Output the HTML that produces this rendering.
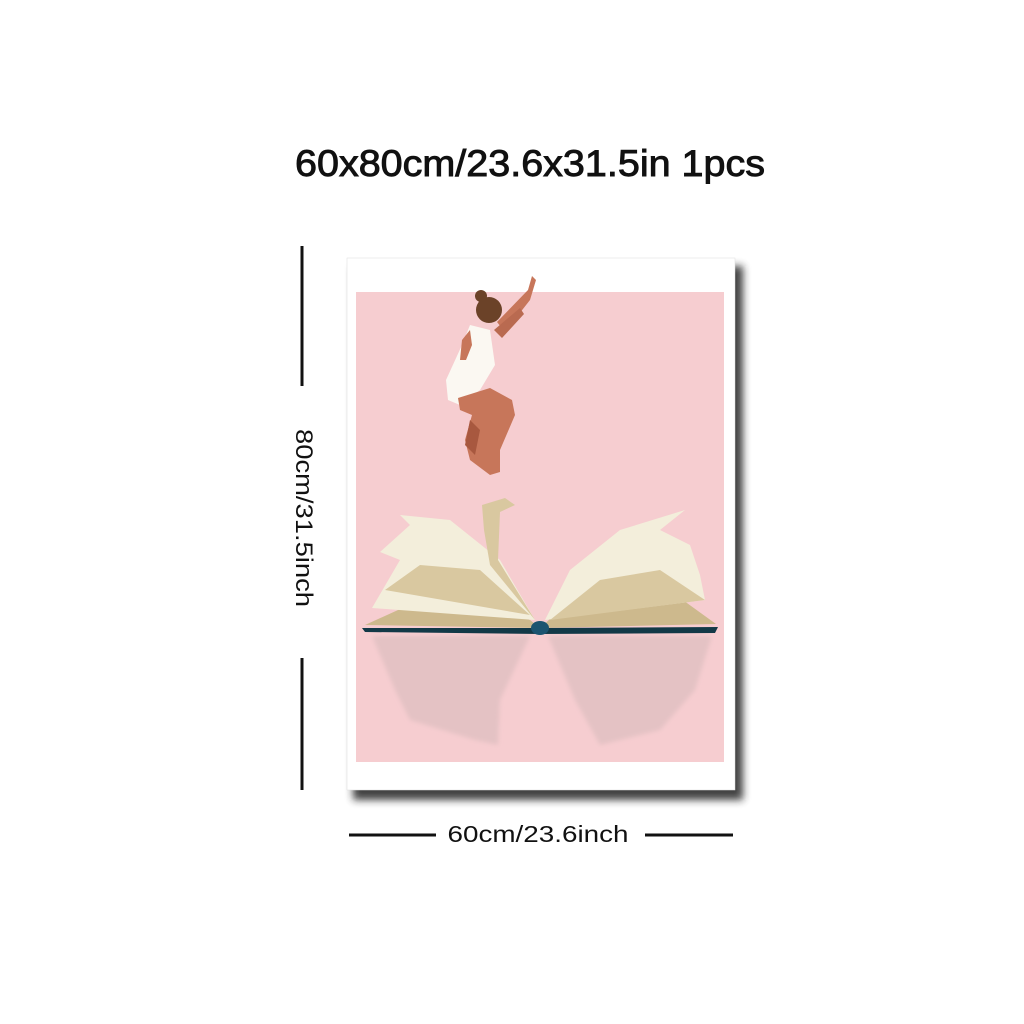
<!DOCTYPE html>
<html><head><style>
html,body{margin:0;padding:0;background:#fff;width:1024px;height:1024px;overflow:hidden;font-family:"Liberation Sans",sans-serif}
</style></head><body>
<svg width="1024" height="1024" viewBox="0 0 1024 1024" xmlns="http://www.w3.org/2000/svg">
<defs><filter id="sh" x="-10%" y="-10%" width="130%" height="130%"><feGaussianBlur stdDeviation="4"/></filter>
<filter id="bl"><feGaussianBlur stdDeviation="2"/></filter></defs>
<text x="530" y="176" text-anchor="middle" font-family="Liberation Sans, sans-serif" font-size="37" fill="#111" stroke="#111" stroke-width="0.9" textLength="470" lengthAdjust="spacingAndGlyphs">60x80cm/23.6x31.5in 1pcs</text>
<line x1="302" y1="246" x2="302" y2="386" stroke="#111" stroke-width="3"/>
<line x1="302" y1="658" x2="302" y2="790" stroke="#111" stroke-width="3"/>
<text transform="translate(296,518) rotate(90)" text-anchor="middle" font-family="Liberation Sans, sans-serif" font-size="24" fill="#111" textLength="178" lengthAdjust="spacingAndGlyphs">80cm/31.5inch</text>
<line x1="349" y1="835" x2="436" y2="835" stroke="#111" stroke-width="3"/>
<line x1="645" y1="835" x2="733" y2="835" stroke="#111" stroke-width="3"/>
<text x="538" y="842" text-anchor="middle" font-family="Liberation Sans, sans-serif" font-size="23" fill="#111" textLength="181" lengthAdjust="spacingAndGlyphs">60cm/23.6inch</text>
<rect x="353" y="266" width="390" height="534" fill="#222" filter="url(#sh)" opacity="0.85"/>
<rect x="347" y="258" width="388" height="532" fill="#fff" stroke="#ddd" stroke-width="0.5"/>
<rect x="356" y="292" width="368" height="470" fill="#f6cdd0"/>
<g fill="#e4c2c4" filter="url(#bl)">
<path d="M372 636 L530 636 L500 700 L498 745 L475 740 L410 720 L395 690 Z"/>
<path d="M548 636 L712 636 L695 690 L660 730 L600 745 L575 700 Z"/>
</g>
<path d="M365 625 L420 600 L470 598 L530 620 L540 628 Z" fill="#cdb98d"/>
<path d="M540 628 L560 610 L620 595 L680 598 L716 624 Z" fill="#cdb98d"/>
<path d="M372 608 L400 560 L380 552 L410 525 L400 515 L450 520 L500 560 L535 620 Z" fill="#f3eedb"/>
<path d="M385 590 L420 565 L480 570 L530 615 Z" fill="#d9c8a0"/>
<path d="M482 505 L505 498 L515 505 L500 512 L498 560 L535 620 L490 565 L484 530 Z" fill="#d9c8a0"/>
<path d="M545 620 L570 570 L620 530 L685 510 L660 530 L690 545 L700 575 L705 600 Z" fill="#f3eedb"/>
<path d="M550 620 L600 580 L660 570 L705 600 Z" fill="#d9c8a0"/>
<path d="M362 628 L540 628 L718 627 L715 633 L540 634 L365 632 Z" fill="#123947"/>
<ellipse cx="540" cy="628" rx="9" ry="7" fill="#1b5470"/>
<!-- figure -->
<path d="M497 322 L528 290 L532 276 L536 280 L530 300 L505 332 Z" fill="#c7765a"/>
<path d="M494 330 L520 308 L524 314 L502 338 Z" fill="#b96a50"/>
<circle cx="489" cy="310" r="13" fill="#6b4228"/>
<circle cx="481" cy="296" r="6" fill="#6b4228"/>
<path d="M470 325 L490 330 L495 365 L480 390 L460 405 L448 400 L446 380 L462 345 Z" fill="#fbf8f2"/>
<path d="M462 340 L470 330 L472 345 L466 360 L460 360 Z" fill="#c7765a"/>
<path d="M458 398 L490 388 L512 400 L515 415 L500 450 L500 472 L490 475 L470 460 L465 440 L472 415 L460 410 Z" fill="#c7765a"/>
<path d="M470 420 L480 430 L475 455 L465 445 Z" fill="#a8583f"/>
</svg>
</body></html>
